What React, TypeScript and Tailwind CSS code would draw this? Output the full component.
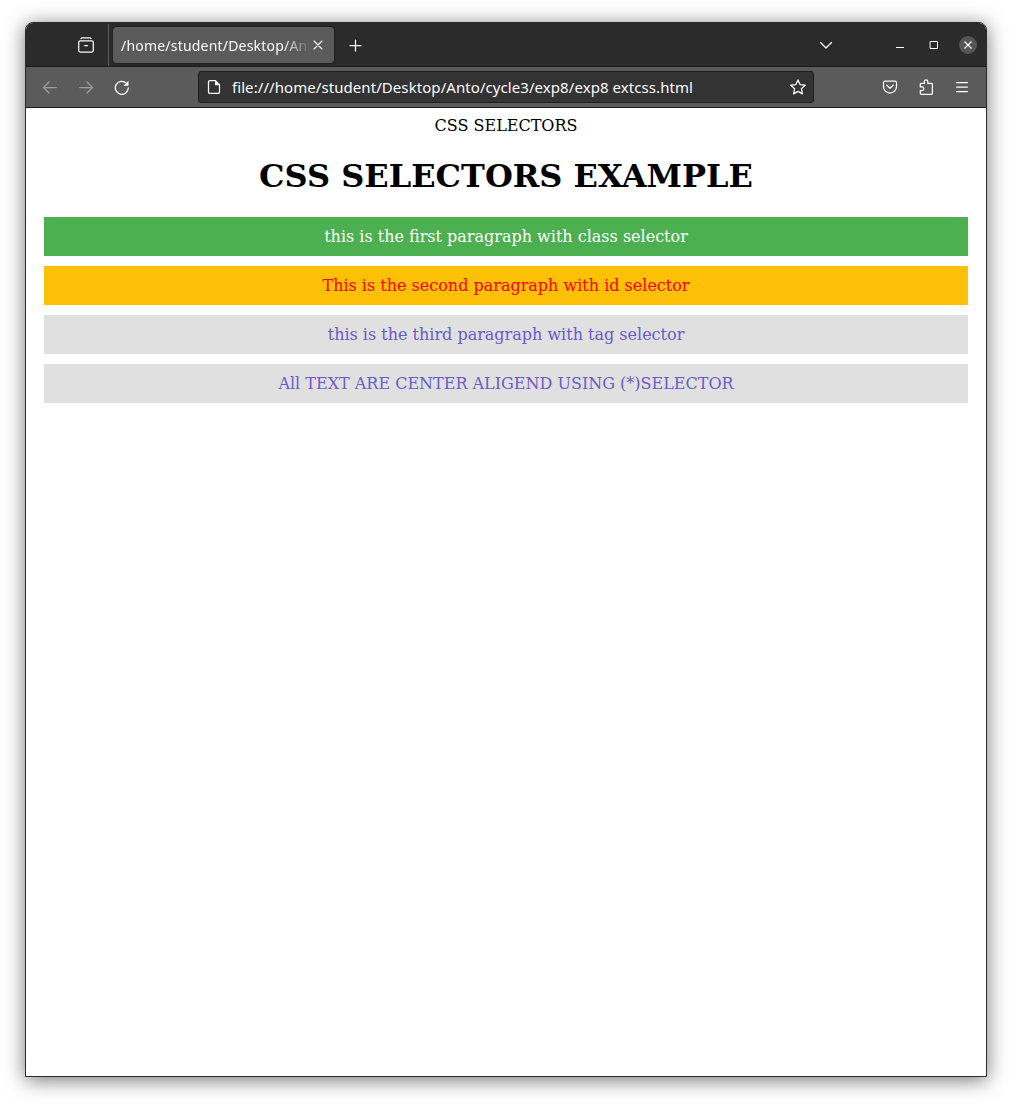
import type { ReactNode } from 'react';

function Icon({ children, className = '' }: { children: ReactNode; className?: string }) {
  return (
    <svg
      width={16}
      height={16}
      viewBox="0 0 16 16"
      fill="none"
      stroke="currentColor"
      strokeWidth="1.25"
      strokeLinecap="round"
      strokeLinejoin="round"
      className={`shrink-0 ${className}`}
    >
      {children}
    </svg>
  );
}

function TitleBar() {
  return (
    <div className="flex h-[44px] shrink-0 items-center border-b border-[#1c1c1c] bg-[#2b2b2b] pt-px text-[#fbfbfe]">
      <div className="flex h-full w-[83px] items-center justify-end border-r border-[#5a5a5a] pr-[14px]">
        <Icon>
          <path d="M3 1.700C3.300 1 3.600.8 4.200.8h7.600c.6 0 .9.2 1.200.9" />
          <rect x="0.7" y="3.900" width="14.600" height="11.200" rx="1.500" />
          <path d="M6.500 8.500h3" />
        </Icon>
      </div>
      <div className="ml-1 flex h-9 w-[221px] items-center rounded bg-[#5b5b5b] pl-2 shadow-[0_0_3px_rgba(0,0,0,0.5)]">
        <span className="w-[189px] whitespace-nowrap pt-px font-['Noto_Sans',sans-serif] text-[14px] leading-5 tracking-[0.2px] [mask-image:linear-gradient(to_left,transparent,black_26px)]">
          /home/student/Desktop/Ant
        </span>
        <Icon>
          <path d="M4 4l8 8M12 4l-8 8" strokeWidth="1.100" />
        </Icon>
      </div>
      <Icon className="ml-[13px]">
        <path d="M8.500 3v11M3 8.500h11" />
      </Icon>
      <Icon className="ml-auto">
        <path d="M2.500 5.500L8 11l5.500-5.500" />
      </Icon>
      <Icon className="ml-[58px]">
        <path d="M4 10.500h8" strokeWidth="1" strokeLinecap="butt" />
      </Icon>
      <Icon className="ml-[18px]">
        <path d="M4.500 4.500h7v7h-7z" strokeWidth="1" strokeLinejoin="miter" />
      </Icon>
      <span className="mr-[9px] ml-[17px] flex size-[18px] items-center justify-center rounded-full bg-[#555555]">
        <Icon>
          <path d="M4.500 4.500l7 7M11.500 4.500l-7 7" strokeLinecap="butt" />
        </Icon>
      </span>
    </div>
  );
}

function Toolbar() {
  return (
    <div className="flex h-[41px] shrink-0 items-center border-b border-[#1c1c1c] bg-[#5b5b5b] pl-4 text-[#fbfbfe]">
      <Icon className="text-[#9c9c9d]">
        <path d="M14.400 8.500H1.700M7 3L1.500 8.500 7 14" />
      </Icon>
      <Icon className="ml-5 text-[#9c9c9d]">
        <path d="M1.600 8.500h12.700M9 3l5.500 5.500L9 14" />
      </Icon>
      <Icon className="ml-5">
        <path d="M14.300 8.800a6.500 6.500 0 1 1-2-4.700" />
        <path d="M14.500 1.800v5h-5z" fill="currentColor" stroke="none" />
      </Icon>
      <div className="ml-[68px] flex h-[32px] w-[616px] items-center rounded-[3px] border border-[#1f1f1f] bg-[#333333] pr-[7px] pl-[7px]">
        <Icon>
          <path d="M9.500 1.600H4A1.500 1.500 0 0 0 2.500 3.100v10A1.300 1.300 0 0 0 3.800 14.400h8.400a1.300 1.300 0 0 0 1.300-1.300V5.700z" />
          <path d="M9 1.500v4.800h4.700z" fill="currentColor" stroke="none" />
        </Icon>
        <span className="ml-[10px] whitespace-nowrap font-['Noto_Sans',sans-serif] text-[15px] leading-5 tracking-[0.07px]">
          file:///home/student/Desktop/Anto/cycle3/exp8/exp8 extcss.html
        </span>
        <Icon className="ml-auto">
          <path d="M8 .9l2.100 4.700 5.100.6-3.800 3.500 1 5.200L8 12.400l-4.400 2.500 1-5.200L.8 6.200l5.100-.6z" />
        </Icon>
      </div>
      <Icon className="ml-[68px]">
        <path d="M3 2.200h10a1.500 1.500 0 0 1 1.500 1.500V7.500a6.500 6.500 0 0 1-13 0V3.700A1.500 1.500 0 0 1 3 2.200z" />
        <path d="M4.800 6.200L8 9.300l3.200-3.100" />
      </Icon>
      <Icon className="ml-5">
        <path d="M2.300 14.200V11.500H4a1.800 1.800 0 0 0 0-3.600H2.300V5.400a1 1 0 0 1 1-1h3.100V2.600a1.700 1.700 0 0 1 3.400 0v1.800h3.600a1 1 0 0 1 1 1v8.900a1 1 0 0 1-1 1H3.300a1 1 0 0 1-1-1z" />
      </Icon>
      <Icon className="ml-5">
        <path d="M2.500 3.500h11M2.500 8h11M2.500 12.500h11" />
      </Icon>
    </div>
  );
}

const paragraphs = [
  { text: 'this is the first paragraph with class selector', style: 'bg-[#4caf50] text-white' },
  { text: 'This is the second paragraph with id selector', style: 'bg-[#ffc107] text-[#ff0000]' },
  { text: 'this is the third paragraph with tag selector', style: 'bg-[#e0e0e0] text-[#6a5acd]' },
  { text: 'All TEXT ARE CENTER ALIGEND USING (*)SELECTOR', style: 'bg-[#e0e0e0] text-[#6a5acd]' },
];

export default function App() {
  return (
    <div className="h-[1105px] w-[1012px] overflow-hidden bg-white pt-[22px] pl-[25px]">
      <div className="flex h-[1055px] w-[962px] flex-col overflow-hidden rounded-t-[8px] border border-[#2b2b2b] bg-white shadow-[0_3px_20px_rgba(0,0,0,0.55)]">
        <TitleBar />
        <Toolbar />
        <main className="p-2 text-center font-['DejaVu_Serif',serif] text-base leading-[19px] text-black">
          <div>CSS SELECTORS</div>
          <h1 className="mt-[22px] mb-[21px] text-[32px] leading-[39px] font-bold">CSS SELECTORS EXAMPLE</h1>
          <div className="mx-[10px] flex flex-col gap-[10px]">
            {paragraphs.map((p) => (
              <p key={p.text} className={`p-[10px] ${p.style}`}>
                {p.text}
              </p>
            ))}
          </div>
        </main>
      </div>
    </div>
  );
}
